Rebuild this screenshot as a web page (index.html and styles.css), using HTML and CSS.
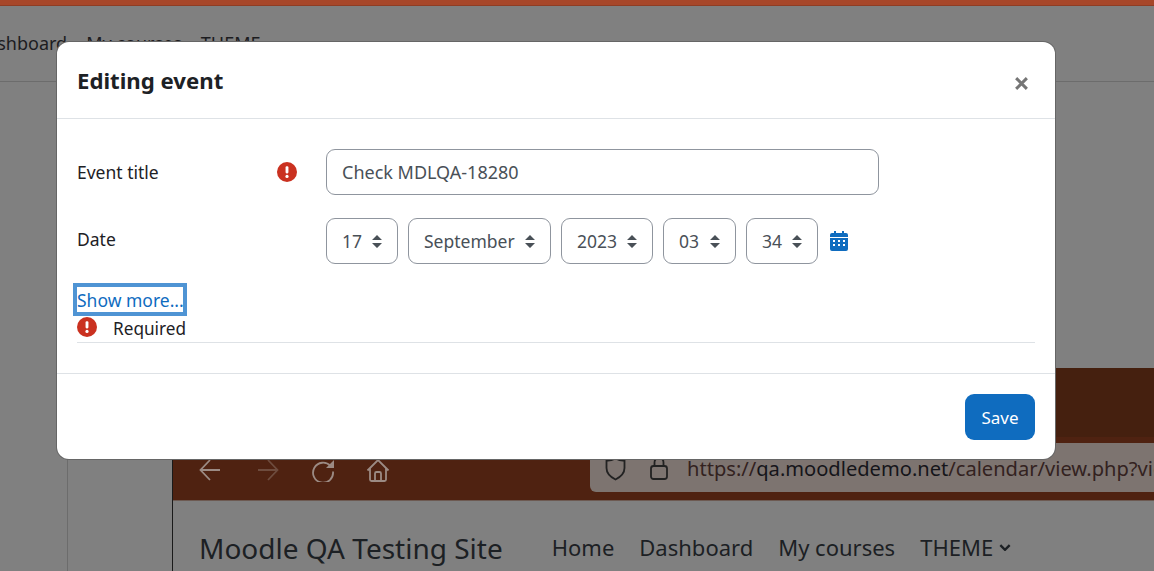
FILE: index.html
```html
<!DOCTYPE html>
<html lang="en">
<head>
<meta charset="utf-8">
<title>Editing event</title>
<link rel="stylesheet" href="styles.css">
</head>
<body>
<div class="page">
  <div class="accent-bar"></div>
  <nav class="back-nav"><span>Dashboard</span><span>My courses</span><span>THEME</span></nav>
  <div class="rule-v"></div>
  <div class="shot">
    <div class="shot-top"></div>
    <div class="shot-chrome">
      <svg class="tool t1" viewBox="0 0 24 24"><path d="M22 12H3M12 2L2.500 12L12 22"/></svg>
      <svg class="tool t2" viewBox="0 0 24 24"><path d="M2 12H21M12 2L21.500 12L12 22"/></svg>
      <svg class="tool t3" viewBox="0 0 24 24"><path d="M19.500 8A10 10 0 1 0 22 13.500"/><path class="solid" d="M23 2V10H15Z"/></svg>
      <svg class="tool t4" viewBox="0 0 24 24"><path d="M1.500 12.500L12 2L22.500 12.500M4 10.500V21.500Q4 23 5.500 23H18.500Q20 23 20 21.500V10.500M9 23V15.500Q9 14 10.500 14H13.500Q15 14 15 15.500V23"/></svg>
      <div class="urlbar">
        <svg class="shield" viewBox="0 0 20 24"><path d="M10 1.500Q15 4 19 3.500V11Q19 18 10 22.500Q1 18 1 11V3.500Q5 4 10 1.500Z"/></svg>
        <svg class="lock" viewBox="0 0 18 24"><path d="M4.500 9V5.500Q4.500 1 9 1Q13.500 1 13.500 5.500V9"/><rect x="1" y="9" width="16" height="13" rx="2.500"/></svg>
        <span class="url">https://<b>qa.moodledemo.net</b>/calendar/view.php?view=month</span>
      </div>
    </div>
    <div class="shot-nav">
      <span class="site">Moodle QA Testing Site</span>
      <span>Home</span><span>Dashboard</span><span>My courses</span>
      <span class="theme">THEME<svg class="chev" viewBox="0 0 10 6"><path d="M1 1L5 5L9 1"/></svg></span>
    </div>
  </div>

  <section class="modal">
    <header class="modal-head">
      <h1>Editing event</h1>
      <svg class="close" viewBox="0 0 14 14"><path d="M2 2L12 12M12 2L2 12"/></svg>
    </header>
    <div class="modal-body">
      <div class="row row-title">
        <label class="label">Event title</label>
        <span class="req-col"><svg class="req" viewBox="0 0 21 21"><circle cx="10.500" cy="10.500" r="10.500"/><rect class="mark" x="9" y="4.500" width="3" height="7.500" rx="1.200"/><circle class="mark" cx="10.500" cy="15.200" r="1.700"/></svg></span>
        <div class="input">Check MDLQA-18280</div>
      </div>
      <div class="row row-date">
        <label class="label label-date">Date</label>
        <span class="req-col"></span>
        <div class="selects">
          <div class="select s-day">17<svg class="updown" viewBox="0 0 10 13"><path d="M5 0L10 5H0ZM5 13L0 8H10Z"/></svg></div>
          <div class="select s-month">September<svg class="updown" viewBox="0 0 10 13"><path d="M5 0L10 5H0ZM5 13L0 8H10Z"/></svg></div>
          <div class="select s-year">2023<svg class="updown" viewBox="0 0 10 13"><path d="M5 0L10 5H0ZM5 13L0 8H10Z"/></svg></div>
          <div class="select s-hour">03<svg class="updown" viewBox="0 0 10 13"><path d="M5 0L10 5H0ZM5 13L0 8H10Z"/></svg></div>
          <div class="select s-min">34<svg class="updown" viewBox="0 0 10 13"><path d="M5 0L10 5H0ZM5 13L0 8H10Z"/></svg></div>
          <svg class="cal" viewBox="0 0 18 20"><path fill-rule="evenodd" d="M4 0H6V2H12V0H14V2H16Q18 2 18 4V6H0V4Q0 2 2 2H4ZM0 7H18V18Q18 20 16 20H2Q0 20 0 18ZM3 9V11H5V9ZM8 9V11H10V9ZM13 9V11H15V9ZM3 13V15H5V13ZM8 13V15H10V13ZM13 13V15H15V13Z"/></svg>
        </div>
      </div>
      <a class="more" href="#">Show more...</a>
      <div class="required"><svg class="req" viewBox="0 0 21 21"><circle cx="10.500" cy="10.500" r="10.500"/><rect class="mark" x="9" y="4.500" width="3" height="7.500" rx="1.200"/><circle class="mark" cx="10.500" cy="15.200" r="1.700"/></svg><span class="req-text">Required</span></div>
    </div>
    <footer class="modal-foot"><button class="save">Save</button></footer>
  </section>
</div>
</body>
</html>
```
FILE: styles.css
```css
* { box-sizing: border-box; }
html, body { margin: 0; padding: 0; }
body { font-family: "Noto Sans", "Open Sans", sans-serif; font-size: 16px; color: #1d2125; }
.page { position: relative; width: 1154px; height: 571px; overflow: hidden; background: #808080; }
.accent-bar { height: 6px; background: #a7472a; border-bottom: 1px solid #8f3d24; }
.back-nav { position: absolute; left: -26px; top: 0; width: 1180px; height: 82px; padding-top: 31px; border-bottom: 1px solid #6c6c6c; display: flex; gap: 19px; font-size: 18px; color: #1c1c1f; }
.rule-v { position: absolute; left: 67px; top: 82px; bottom: 0; width: 1px; background: #6c6c6c; }
.shot { position: absolute; left: 172px; top: 368px; right: 0; bottom: 0; border-left: 1px solid #1a1a1a; display: flex; flex-direction: column; }
.shot-top { height: 69px; background: #45200f; }
.shot-chrome { position: relative; height: 64px; background: #4f2211; border-bottom: 1px solid #6d5a52; }
.tool { position: absolute; top: 21px; width: 24px; height: 24px; fill: none; stroke: #9c8b84; stroke-width: 1.800; }
.tool .solid { fill: #9c8b84; stroke: none; }
.t1 { left: 25px; }
.t2 { left: 83px; stroke: #6e4c3e; }
.t3 { left: 138px; }
.t4 { left: 193px; }
.urlbar { position: absolute; left: 417px; top: 6px; right: 0; height: 49px; padding: 14px 0 0 15px; background: #7d7470; border-radius: 6px 0 0 6px; display: flex; align-items: flex-start; white-space: nowrap; }
.shield { width: 21px; height: 24px; fill: none; stroke: #222; stroke-width: 1.800; flex: none; }
.lock { width: 18px; height: 24px; margin-left: 24px; fill: none; stroke: #222; stroke-width: 1.800; flex: none; }
.url { margin-left: 19px; font-size: 20.100px; line-height: 24px; color: #33221f; }
.url b { font-weight: 400; color: #15151a; }
.shot-nav { flex: 1; padding: 31px 0 0 26px; display: flex; align-items: flex-start; gap: 25px; font-size: 22px; line-height: 30px; color: #1c2024; white-space: nowrap; }
.site { font-size: 28px; line-height: 34px; margin-right: 24px; margin-top: -1px; }
.theme { display: flex; align-items: center; gap: 6px; }
.chev { width: 12px; height: 7px; fill: none; stroke: #1c2024; stroke-width: 2; }

.modal { position: absolute; left: 57px; top: 42px; width: 998px; height: 417px; background: #fff; border-radius: 12px; box-shadow: 0 0 0 1px #666; display: flex; flex-direction: column; }
.modal-head { height: 77px; flex: none; padding: 2px 20px 0; border-bottom: 1px solid #dee2e6; display: flex; justify-content: space-between; align-items: center; }
.modal-head h1 { margin: 0; font-size: 22.200px; line-height: 30px; font-weight: 700; }
.close { width: 15px; height: 15px; margin: 4px 6px 0 0; fill: none; stroke: #757575; stroke-width: 2.800; }
.modal-body { flex: 1; padding: 30px 20px 0; display: flex; flex-direction: column; }
.row { display: flex; align-items: flex-start; }
.row-title { height: 69px; }
.row-date { height: 65px; }
.label { width: 200px; line-height: 46px; font-size: 17.500px; }
.label-date { line-height: 42px; }
.req-col { width: 49px; height: 46px; display: flex; align-items: center; }
.req { width: 20px; height: 20px; fill: #ca3120; flex: none; }
.req .mark { fill: #fff; }
.input { width: 553px; height: 46px; padding-left: 15px; border: 1px solid #8f959e; border-radius: 9px; line-height: 44px; font-size: 18px; color: #495057; }
.selects { display: flex; align-items: center; gap: 10px; }
.select { height: 46px; padding-left: 15px; border: 1px solid #8f959e; border-radius: 9px; display: flex; align-items: center; justify-content: space-between; padding-right: 15px; font-size: 17.500px; color: #495057; }
.s-day { width: 72px; }
.s-month { width: 143px; }
.s-year { width: 92px; }
.s-hour { width: 73px; }
.s-min { width: 72px; }
.updown { width: 10px; height: 13px; fill: #495057; flex: none; }
.cal { width: 18px; height: 20px; margin-left: 2px; fill: #0f6cbf; }
.more { align-self: flex-start; margin-left: -4px; width: 114px; height: 33px; line-height: 26px; border: 4px solid #4f94d4; color: #0f6cbf; text-decoration: none; font-size: 17.500px; white-space: nowrap; }
.required { height: 27px; padding-top: 1px; border-bottom: 1px solid #dee2e6; display: flex; align-items: flex-start; gap: 16px; font-size: 17.200px; line-height: 23px; }
.modal-foot { height: 86px; flex: none; padding: 20px; border-top: 1px solid #dee2e6; display: flex; justify-content: flex-end; }
.save { width: 70px; height: 46px; background: #0f6cbf; color: #fff; border: 0; border-radius: 9px; font: inherit; font-size: 17px; }
```
